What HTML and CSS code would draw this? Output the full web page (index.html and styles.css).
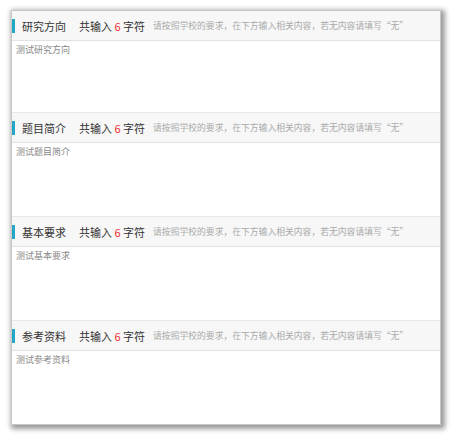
FILE: index.html
```
<!DOCTYPE html>
<html lang="zh-CN">
<head>
    <meta charset="UTF-8">
    <meta name="viewport" content="width=device-width, initial-scale=1.0">
    <title>论文要求</title>
    <link rel="stylesheet" href="styles.css">
</head>
<body>
    <div class="panel">
        <div class="section">
            <div class="section-head">
                <span class="bar"></span>
                <span class="title">研究方向</span>
                <span class="count">共输入 <em>6</em> 字符</span>
                <span class="hint">请按照学校的要求，在下方输入相关内容，若无内容请填写“无”</span>
            </div>
            <div class="section-body">测试研究方向</div>
        </div>

        <div class="section">
            <div class="section-head">
                <span class="bar"></span>
                <span class="title">题目简介</span>
                <span class="count">共输入 <em>6</em> 字符</span>
                <span class="hint">请按照学校的要求，在下方输入相关内容，若无内容请填写“无”</span>
            </div>
            <div class="section-body">测试题目简介</div>
        </div>

        <div class="section">
            <div class="section-head">
                <span class="bar"></span>
                <span class="title">基本要求</span>
                <span class="count">共输入 <em>6</em> 字符</span>
                <span class="hint">请按照学校的要求，在下方输入相关内容，若无内容请填写“无”</span>
            </div>
            <div class="section-body">测试基本要求</div>
        </div>

        <div class="section">
            <div class="section-head">
                <span class="bar"></span>
                <span class="title">参考资料</span>
                <span class="count">共输入 <em>6</em> 字符</span>
                <span class="hint">请按照学校的要求，在下方输入相关内容，若无内容请填写“无”</span>
            </div>
            <div class="section-body">测试参考资料</div>
        </div>
    </div>
</body>
</html>
```

FILE: styles.css
```
body {
    margin: 0;
    padding: 10px 13px 13px 11px;
    background-color: #ffffff;
    font-family: "Noto Sans CJK SC", "Noto Sans", sans-serif;
    color: #333333;
}
.panel {
    background-color: #ffffff;
    border: 1px solid #c8c8c8;
    box-shadow: 2px 2px 5px 2px #9a9a9a;
}
.section {
    border-top: 1px solid #e6e6e6;
}
.section:first-child {
    border-top: none;
}
.section-head {
    display: flex;
    align-items: center;
    height: 29px;
    background-color: #f7f7f7;
    border-bottom: 1px solid #e3e3e3;
    white-space: nowrap;
}
.bar {
    width: 3px;
    height: 14px;
    background-color: #22a8c3;
    margin-right: 7px;
}
.title {
    font-size: 11px;
    color: #333333;
    margin-right: 13px;
}
.count {
    font-size: 11px;
    color: #333333;
    margin-right: 8px;
}
.count em {
    font-style: normal;
    color: #f23030;
}
.hint {
    font-size: 8.8px;
    color: #aaaaaa;
}
.section-body {
    height: 71px;
    padding: 2px 4px 0;
    font-size: 9px;
    line-height: 14px;
    color: #888888;
}
.section:first-child .section-body {
    height: 69px;
}
```
